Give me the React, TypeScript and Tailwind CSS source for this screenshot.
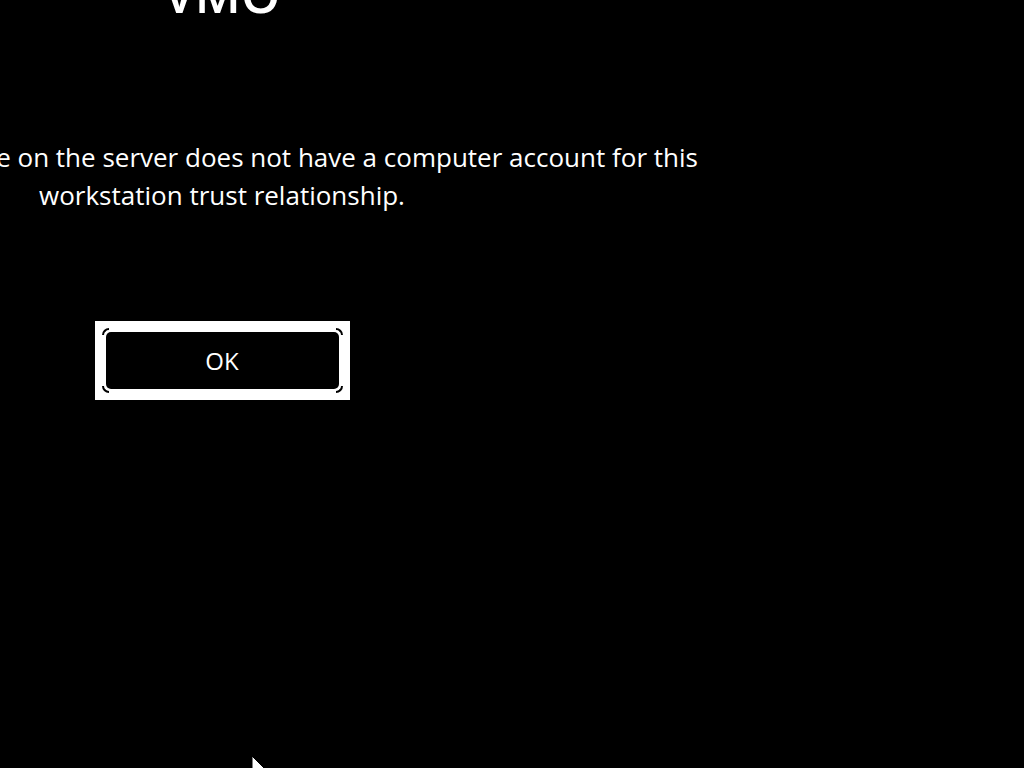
export default function App() {
  return (
    <div
      className="relative h-screen w-full overflow-hidden bg-black text-white"
      style={{ fontFamily: '"Open Sans", "Noto Sans", sans-serif' }}
    >
      {/* centered column, its middle sits at x ~222 */}
      <div className="ml-[-278px] flex w-[1000px] flex-col items-center">
        <h1 className="mt-[-30px] text-[50px] font-semibold leading-[48px]">VMO</h1>

        <p className="mt-[120px] whitespace-nowrap text-center text-[26px] leading-[38px]">
          The security database on the server does not have a computer account for this
          <br />
          workstation trust relationship.
        </p>

        <button className="mt-[107px] h-[79px] w-[255px] bg-white p-[11px]">
          <div className="relative flex h-full w-full items-center justify-center rounded-[5px] bg-black text-[24px]">
            OK
            <span className="absolute left-[-4px] top-[-4px] h-[7px] w-[7px] rounded-tl-[7px] border-l-2 border-t-2 border-black" />
            <span className="absolute right-[-4px] top-[-4px] h-[7px] w-[7px] rounded-tr-[7px] border-r-2 border-t-2 border-black" />
            <span className="absolute bottom-[-4px] left-[-4px] h-[7px] w-[7px] rounded-bl-[7px] border-b-2 border-l-2 border-black" />
            <span className="absolute bottom-[-4px] right-[-4px] h-[7px] w-[7px] rounded-br-[7px] border-b-2 border-r-2 border-black" />
          </div>
        </button>
      </div>

      {/* mouse pointer */}
      <svg className="absolute left-[251px] top-[755px]" width="16" height="24" viewBox="0 0 16 24">
        <path d="M1 1 L1 19 L5 15 L8 22 L11 21 L8 14 L14 14 Z" fill="#fff" stroke="#000" strokeWidth="1" />
      </svg>
    </div>
  );
}
